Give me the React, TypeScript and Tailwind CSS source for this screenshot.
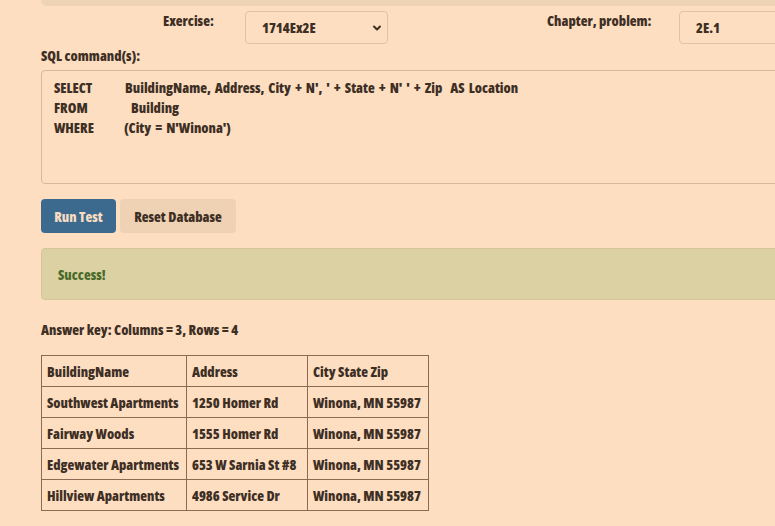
import React from 'react';

const rows = [
  ['Southwest Apartments', '1250 Homer Rd', 'Winona, MN 55987'],
  ['Fairway Woods', '1555 Homer Rd', 'Winona, MN 55987'],
  ['Edgewater Apartments', '653 W Sarnia St #8', 'Winona, MN 55987'],
  ['Hillview Apartments', '4986 Service Dr', 'Winona, MN 55987'],
];

function SqlLine({ kw, width, children }: { kw: string; width: string; children: React.ReactNode }) {
  return (
    <div className="flex h-5 items-center">
      <span className={width}>{kw}</span>
      <span className="whitespace-pre">{children}</span>
    </div>
  );
}

export default function App() {
  return (
    <div className="h-[526px] w-[775px] overflow-hidden bg-[#fddec1] font-['Open_Sans',sans-serif] text-[14px] font-extrabold text-[#3e2f25] [font-stretch:78%]">
      <div className="pl-[41px]">
        <div className="h-[6px] w-[760px] rounded-bl-md bg-[#efd3b5]" />

        <div className="mt-[5px] flex h-[33px] w-[760px]">
          <div className="ml-[122px] w-[82px] leading-[20px]">Exercise:</div>
          <div className="flex h-[33px] w-[143px] items-center justify-between rounded border border-[#e2c2a4] pl-[16px] pr-[4px]">
            <span>1714Ex2E</span>
            <svg width="12" height="12" viewBox="0 0 12 12" fill="none" stroke="#3e2f25" strokeWidth="2" strokeLinecap="round" strokeLinejoin="round">
              <path d="M3 4.5 L6 7.5 L9 4.5" />
            </svg>
          </div>
          <div className="ml-[159px] w-[132px] leading-[20px]">Chapter, problem:</div>
          <div className="flex h-[33px] w-[120px] items-center rounded border border-[#e2c2a4] pl-[16px]">2E.1</div>
        </div>

        <div className="h-[26px] leading-[24px]">SQL command(s):</div>

        <div className="h-[114px] w-[760px] rounded border border-[#d8b898] pl-[12px] pt-[6px] [word-spacing:1.5px]">
          <SqlLine kw="SELECT" width="w-[71px]">BuildingName, Address, City + N&#39;, &#39; + State + N&#39; &#39; + Zip  AS Location</SqlLine>
          <SqlLine kw="FROM" width="w-[77px]">Building</SqlLine>
          <SqlLine kw="WHERE" width="w-[70px]">(City = N&#39;Winona&#39;)</SqlLine>
        </div>

        <div className="mt-[15px] flex gap-[4px]">
          <button className="h-[34px] w-[75px] rounded bg-[#3c6a8e] text-[#f7dcc2]">Run Test</button>
          <button className="h-[34px] w-[116px] rounded bg-[#efd1b4]">Reset Database</button>
        </div>

        <div className="mt-[15px] flex h-[52px] w-[760px] items-center rounded border border-[#d5c597] bg-[#dcd1a2] pl-[16px] text-[#4a6b2b]">
          Success!
        </div>

        <div className="mt-[20px] h-[20px] leading-[20px]">Answer key: Columns = 3, Rows = 4</div>

        <table className="mt-[15px] w-[387px] table-fixed border-collapse">
          <thead>
            <tr>
              <th className="h-[31px] w-[145px] border border-[#8c6a52] px-[5px] text-left font-extrabold">BuildingName</th>
              <th className="h-[31px] w-[121px] border border-[#8c6a52] px-[5px] text-left font-extrabold">Address</th>
              <th className="h-[31px] w-[121px] border border-[#8c6a52] px-[5px] text-left font-extrabold">City State Zip</th>
            </tr>
          </thead>
          <tbody>
            {rows.map((r) => (
              <tr key={r[0]}>
                {r.map((c) => (
                  <td key={c} className="h-[31px] whitespace-nowrap border border-[#8c6a52] px-[5px]">{c}</td>
                ))}
              </tr>
            ))}
          </tbody>
        </table>
      </div>
    </div>
  );
}
